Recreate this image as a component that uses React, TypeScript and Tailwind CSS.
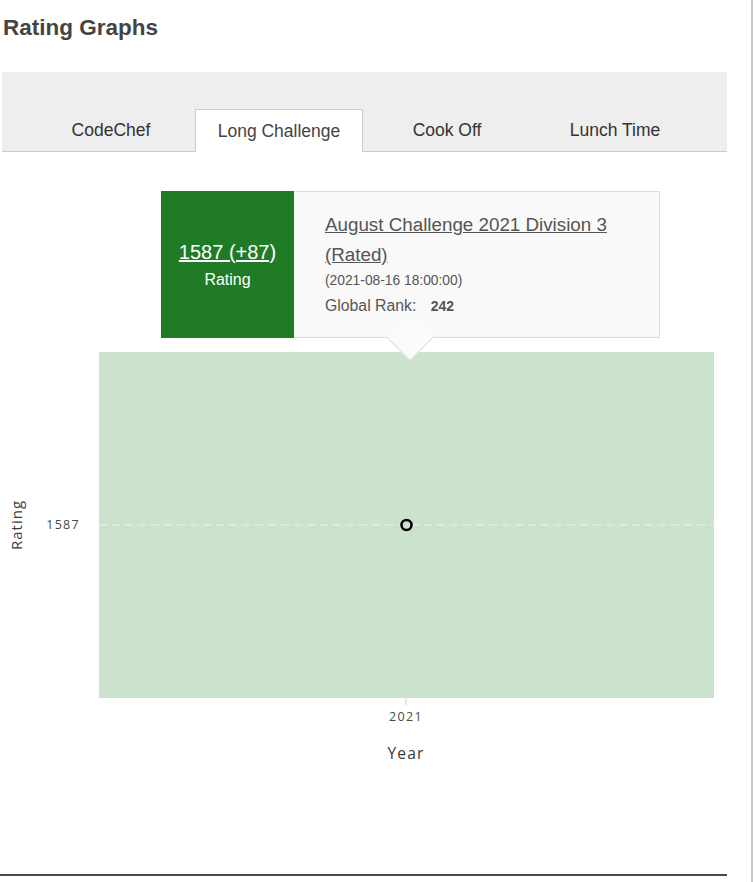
import React from "react";

const tabs = ["CodeChef", "Long Challenge", "Cook Off", "Lunch Time"];

export default function App() {
  return (
    <div className="relative w-[753px] h-[882px] bg-white overflow-hidden" style={{ fontFamily: '"Liberation Sans", Arial, sans-serif' }}>
      <div className="w-[753px] h-[882px] border-r-2 border-[#c9c9c9]">
        <div className="w-[727px]">
          <h2 className="pl-[3px] pt-[14px] text-[22.5px] leading-[28px] font-bold text-[#444]">Rating Graphs</h2>
          <div className="ml-[2px] mt-[30px] w-[725px] h-[80px] bg-[#eeeeee] border-b border-[#cccccc] flex items-end pl-[25px]">
            {tabs.map((t, i) => (
              <div
                key={t}
                className={
                  i === 1
                    ? "w-[168px] h-[43px] -mb-px bg-white border border-b-0 border-[#cccccc] flex items-center justify-center text-[17.5px] text-[#444]"
                    : "w-[168px] h-[42px] flex items-center justify-center text-[17.5px] text-[#333]"
                }
              >
                <span className="pt-[1px]">{t}</span>
              </div>
            ))}
          </div>
          <div className="relative h-[724px] border-b-2 border-[#4a4a4a]">
            <svg width="727" height="722" className="block">
              <rect x="99" y="200" width="615" height="346" fill="#cbe2cd" />
              <line x1="99" y1="373" x2="714" y2="373" stroke="#e3ebe3" strokeWidth="1.5" strokeDasharray="8 5" />
              <line x1="406" y1="546" x2="406" y2="553" stroke="#c7d3e0" strokeWidth="1" />
              <circle cx="406.5" cy="373" r="5" fill="#d9d9d9" stroke="#000" strokeWidth="2.5" />
              <text x="80" y="377" textAnchor="end" fontSize="12.5" fill="#4a4a4a" letterSpacing="1.3" style={{ fontFamily: '"Open Sans", sans-serif' }}>1587</text>
              <text x="406" y="569" textAnchor="middle" fontSize="12.5" fill="#4a4a4a" letterSpacing="1.3" style={{ fontFamily: '"Open Sans", sans-serif' }}>2021</text>
              <text x="406" y="607" textAnchor="middle" fontSize="15.5" fill="#3a3a3a" letterSpacing="1.2" style={{ fontFamily: '"Open Sans", sans-serif' }}>Year</text>
              <text x="0" y="0" textAnchor="middle" fontSize="15" fill="#3a3a3a" letterSpacing="1" transform="translate(22 373) rotate(-90)" style={{ fontFamily: '"Open Sans", sans-serif' }}>Rating</text>
            </svg>
            <div className="absolute left-[161px] top-[39px] w-[499px] h-[147px] flex">
              <div className="w-[133px] h-full bg-[#207b26] flex flex-col items-center justify-center text-white">
                <span className="text-[20px] leading-[24px] underline mt-[0px]">1587 (+87)</span>
                <span className="text-[16px] leading-[20px] mt-[6px]">Rating</span>
              </div>
              <div className="relative flex-1 h-full bg-[#f9f9f9] border border-l-0 border-[#dddddd] pl-[31px] pt-[18px] text-[#555]">
                <div className="text-[18.8px] leading-[30px] underline">August Challenge 2021 Division 3 (Rated)</div>
                <div className="text-[13.8px] leading-[20px] mt-[1px]">(2021-08-16 18:00:00)</div>
                <div className="text-[15.8px] leading-[20px] mt-[5px]">
                  Global Rank: <span className="ml-[10px] text-[14px] font-bold">242</span>
                </div>
              </div>
              <div className="absolute left-[232px] top-[129px] w-[34px] h-[34px] rotate-45 bg-[#fbfbfb] border-r border-b border-[#e0e0e0]" />
            </div>
          </div>
        </div>
      </div>
    </div>
  );
}
